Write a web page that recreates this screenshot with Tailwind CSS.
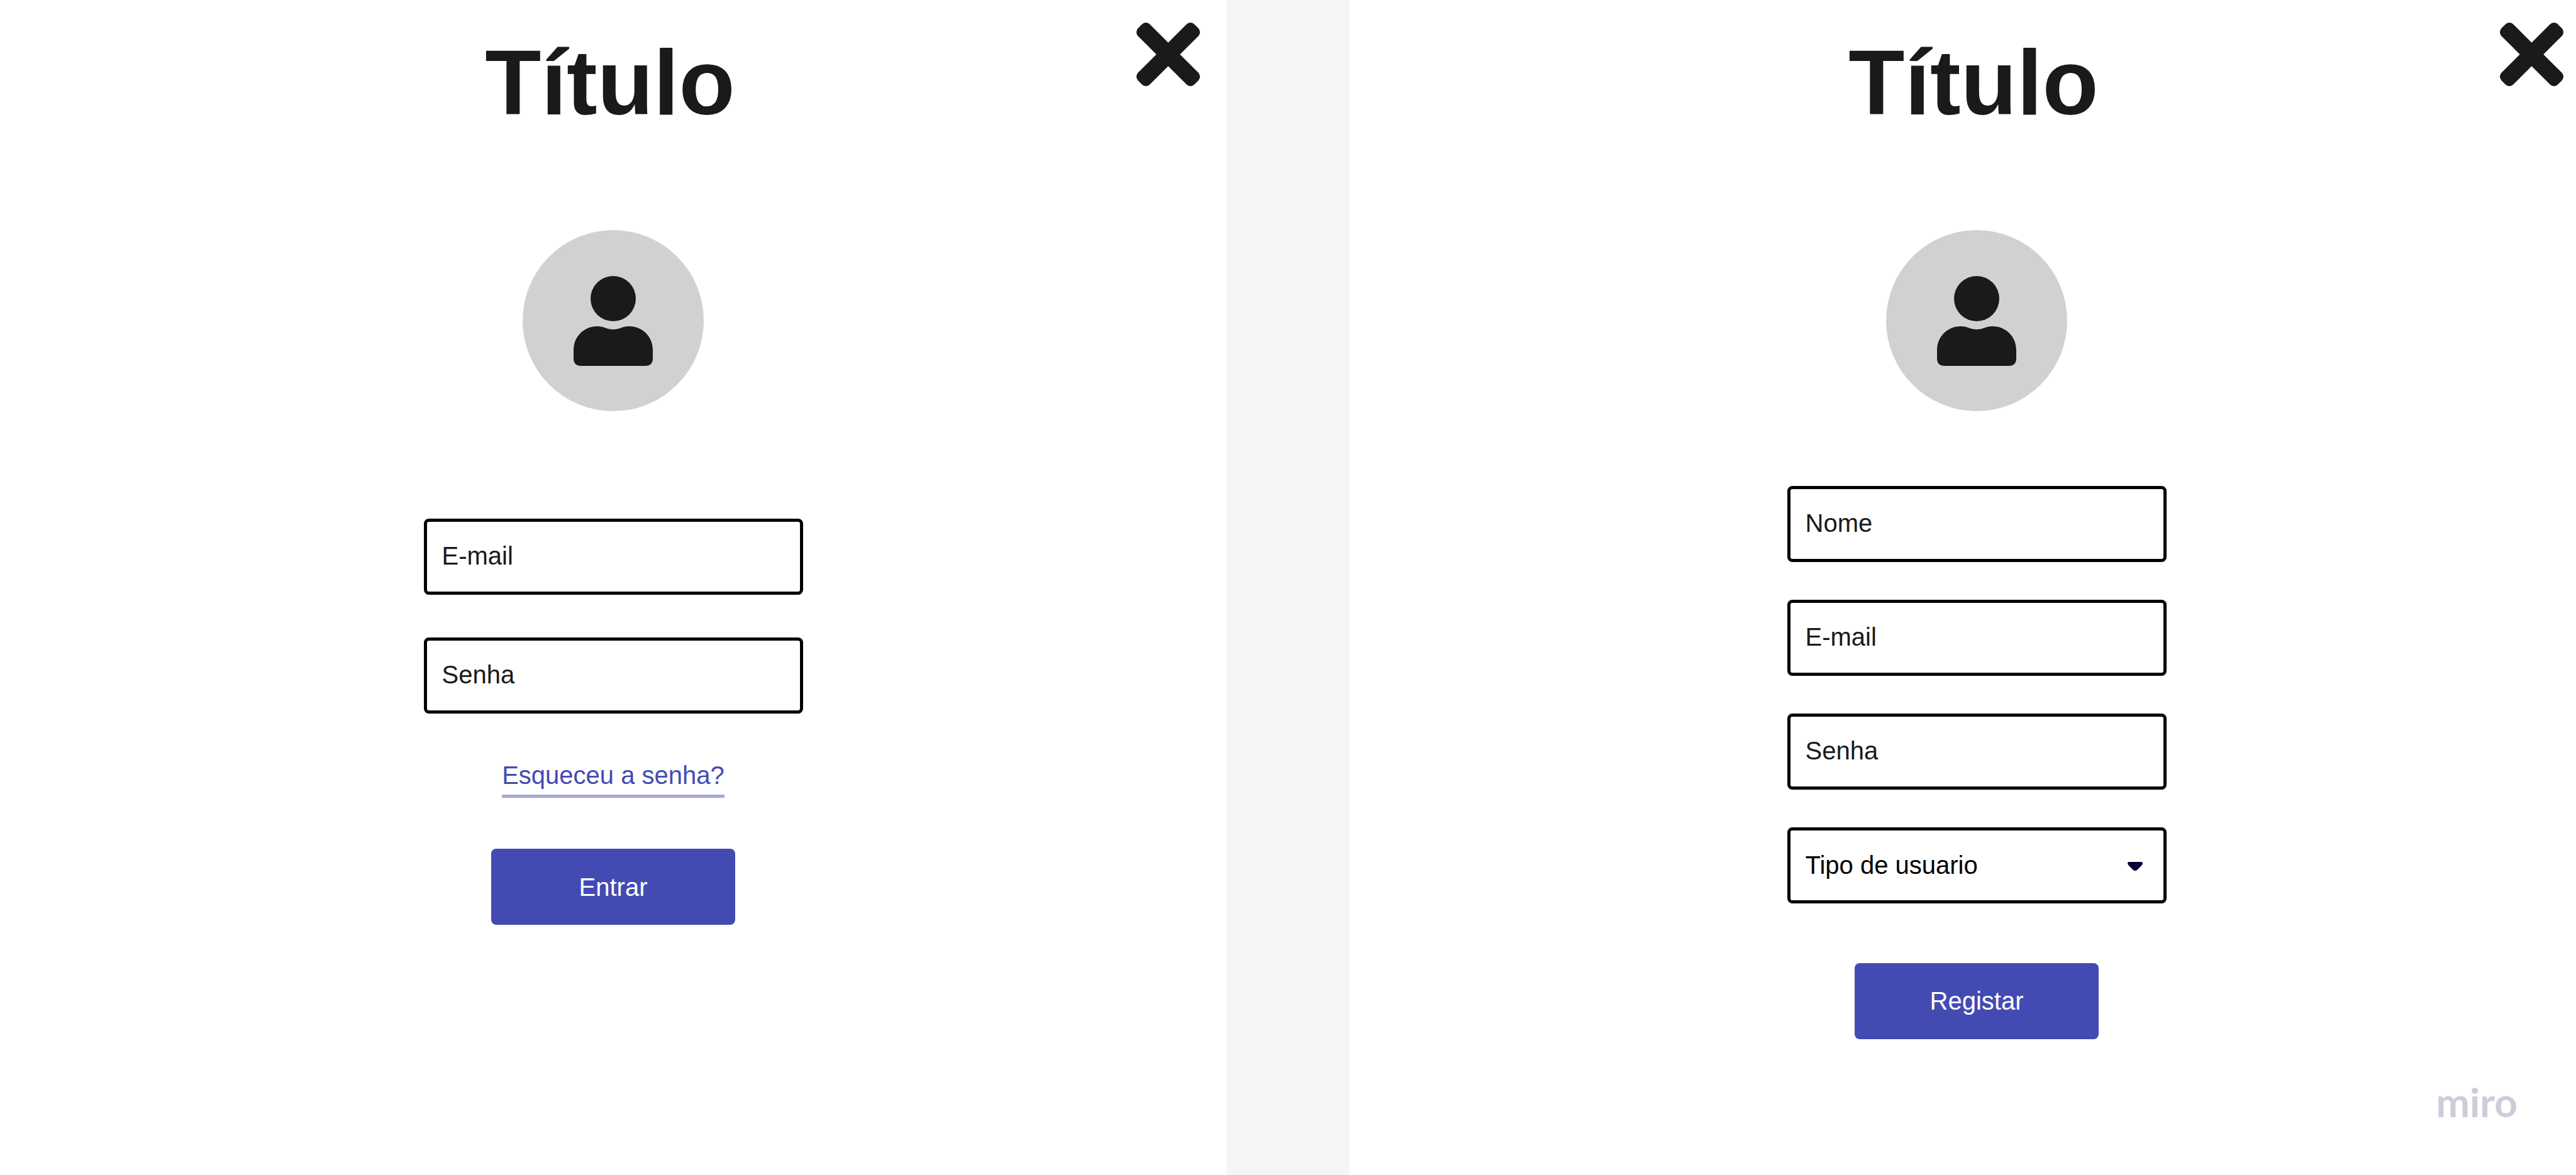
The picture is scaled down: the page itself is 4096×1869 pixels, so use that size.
<!DOCTYPE html>
<html lang="pt">
<head>
<meta charset="utf-8">
<title>Título</title>
<script src="https://cdn.jsdelivr.net/npm/@tailwindcss/browser@4"></script>
</head>
<body class="flex min-h-screen bg-[#f5f5f5] font-['Liberation_Sans',Arial,sans-serif] text-[40px] leading-[48px] text-[#1a1a1a]">

<!-- Login -->
<main class="flex min-w-0 flex-1 flex-col overflow-hidden bg-white">
  <header class="flex items-start pr-[42px]">
    <h1 class="flex-1 pt-[52px] pl-[133px] text-center text-[146px] leading-[160px] font-bold">Título</h1>
    <button type="button" aria-label="Fechar" class="mt-9 size-[101px]">
      <svg viewBox="-50.5 -50.5 101 101" class="size-full" fill="#1a1a1a"><rect x="-63.4" y="-13.3" width="126.8" height="26.6" rx="9" transform="rotate(45)"/><rect x="-63.4" y="-13.3" width="126.8" height="26.6" rx="9" transform="rotate(-45)"/></svg>
    </button>
  </header>
  <form class="flex flex-col items-center pt-[154px]">
    <svg viewBox="0 0 288 288" class="size-[288px]" role="img" aria-label="Usuário"><circle cx="144" cy="144" r="144" fill="#d1d1d1"/><circle cx="144" cy="109" r="36" fill="#1a1a1a"/><path fill="#1a1a1a" d="M81 191C81 169 98 153 119 153C129 153 134 158 144 158C154 158 159 153 169 153C190 153 207 169 207 191V204Q207 216 195 216H93Q81 216 81 204Z"/></svg>
    <div class="flex w-[603px] flex-col gap-[68px] pt-[171px]">
      <input type="email" aria-label="E-mail" placeholder="E-mail" class="h-[121px] rounded-lg border-5 border-black px-6 pb-[2px] placeholder:text-[#1a1a1a] placeholder:opacity-100">
      <input type="password" aria-label="Senha" placeholder="Senha" class="h-[121px] rounded-lg border-5 border-black px-6 pb-[2px] placeholder:text-[#1a1a1a] placeholder:opacity-100">
    </div>
    <a href="#" class="mt-[74px] border-b-5 border-[#a3a7da] pb-[7px] text-[#434bb3]">Esqueceu a senha?</a>
    <button type="submit" class="mt-[81px] h-[121px] w-[388px] rounded-lg bg-[#434bb3] text-white">Entrar</button>
  </form>
</main>

<div class="w-[196px] shrink-0"></div>

<!-- Sign-up -->
<section class="flex min-w-0 flex-1 flex-col overflow-hidden bg-white">
  <div class="-mr-[22px] ml-[22px] flex flex-1 flex-col">
    <header class="flex items-start pr-[42px]">
      <h1 class="flex-1 pt-[52px] pl-[133px] text-center text-[146px] leading-[160px] font-bold">Título</h1>
      <button type="button" aria-label="Fechar" class="mt-9 size-[101px]">
        <svg viewBox="-50.5 -50.5 101 101" class="size-full" fill="#1a1a1a"><rect x="-63.4" y="-13.3" width="126.8" height="26.6" rx="9" transform="rotate(45)"/><rect x="-63.4" y="-13.3" width="126.8" height="26.6" rx="9" transform="rotate(-45)"/></svg>
      </button>
    </header>
    <form class="flex flex-col items-center pt-[154px]">
      <svg viewBox="0 0 288 288" class="size-[288px]" role="img" aria-label="Usuário"><circle cx="144" cy="144" r="144" fill="#d1d1d1"/><circle cx="144" cy="109" r="36" fill="#1a1a1a"/><path fill="#1a1a1a" d="M81 191C81 169 98 153 119 153C129 153 134 158 144 158C154 158 159 153 169 153C190 153 207 169 207 191V204Q207 216 195 216H93Q81 216 81 204Z"/></svg>
      <div class="flex w-[603px] flex-col gap-[60px] pt-[119px]">
        <input type="text" aria-label="Nome" placeholder="Nome" class="h-[121px] rounded-lg border-5 border-black px-6 pb-[2px] placeholder:text-[#1a1a1a] placeholder:opacity-100">
        <input type="email" aria-label="E-mail" placeholder="E-mail" class="h-[121px] rounded-lg border-5 border-black px-6 pb-[2px] placeholder:text-[#1a1a1a] placeholder:opacity-100">
        <input type="password" aria-label="Senha" placeholder="Senha" class="h-[121px] rounded-lg border-5 border-black px-6 pb-[2px] placeholder:text-[#1a1a1a] placeholder:opacity-100">
        <div class="relative">
          <select aria-label="Tipo de usuario" class="h-[121px] w-full appearance-none rounded-lg border-5 border-black px-6 pb-[2px] text-black"><option>Tipo de usuario</option></select>
          <svg viewBox="0 0 24 14" class="pointer-events-none absolute top-[55px] right-[38px] h-[14px] w-6" fill="#050038"><path d="M2 0H22Q24 0 24 2Q24 4 22 6L15 13Q12 15 9 13L2 6Q0 4 0 2Q0 0 2 0Z"/></svg>
        </div>
      </div>
      <button type="submit" class="mt-[95px] h-[121px] w-[388px] rounded-lg bg-[#434bb3] pb-[2px] text-white">Registar</button>
    </form>
    <footer class="mt-auto flex justify-end pr-[115px] pb-[80px]">
      <span class="font-['Lato',sans-serif] text-[64px] leading-[72px] font-bold text-[#cfccd9]">miro</span>
    </footer>
  </div>
</section>
</body>
</html>
